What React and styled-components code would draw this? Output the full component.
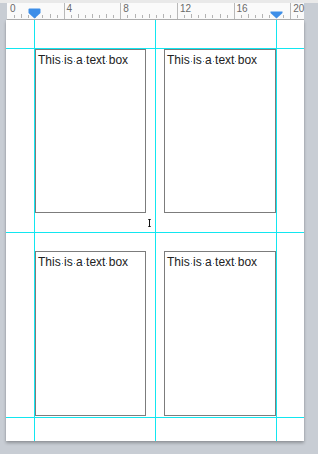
import React from 'react'
import styled, { createGlobalStyle } from 'styled-components'

const GlobalStyle = createGlobalStyle`
  html, body {
    margin: 0;
    padding: 0;
    background: #c8cdd4;
  }
  body {
    font-family: "Liberation Sans", Arial, sans-serif;
  }
`

const UNIT = 56.67 / 4

const Workspace = styled.div`
  width: 318px;
  height: 454px;
  background: #c8cdd4;
  display: flex;
  flex-direction: column;
  overflow: hidden;
`

const TopStrip = styled.div`
  height: 3px;
  background: #e9e9e9;
`

const RulerBar = styled.div`
  position: relative;
  margin-left: 7px;
  width: 297px;
  height: 16px;
  background: #fafafa;
  border-bottom: 1px solid #b4b4b4;
  display: flex;
`

const Segment = styled.div`
  width: ${p => p.width}px;
  flex: none;
  border-left: 1px solid ${p => (p.first ? 'transparent' : '#b9b9b9')};
  box-sizing: border-box;
  font-size: 10px;
  line-height: 10px;
  color: #6a6a6a;
  padding: 1px 0 0 2px;
`

const Ticks = styled.svg`
  position: absolute;
  left: 0;
  bottom: 0;
  pointer-events: none;
`

const Marker = styled.svg`
  position: absolute;
  top: ${p => p.top}px;
  left: ${p => p.left}px;
`

const Page = styled.div`
  position: relative;
  margin-left: 6px;
  width: 298px;
  height: 421px;
  background: #ffffff;
  box-shadow: 0 2px 3px rgba(0, 0, 0, 0.28), 0 0 1px rgba(0, 0, 0, 0.15);
`

const BoxGrid = styled.div`
  display: grid;
  grid-template-columns: 111px 112px;
  grid-template-rows: 164px 165px;
  column-gap: 18px;
  row-gap: 38px;
  padding: 29px 0 0 29px;
`

const TextBox = styled.div`
  border: 1px solid #7c7c7c;
  box-sizing: border-box;
  padding: 3px 2px 2px;
  font-size: 12px;
  color: #222;
  white-space: nowrap;
`

const Space = styled.span`
  position: relative;
  &::after {
    content: '';
    position: absolute;
    left: 1px;
    top: 8px;
    width: 1px;
    height: 1px;
    background: #4f92d6;
  }
`

const Guide = styled.div`
  position: absolute;
  background: #12e6f0;
  ${p =>
    p.vertical
      ? `left: ${p.at}px; top: 0; bottom: 0; width: 1px;`
      : `top: ${p.at}px; left: 0; right: 0; height: 1px;`}
`

const Cursor = styled.svg`
  position: absolute;
  left: 142px;
  top: 199px;
`

const labels = [0, 4, 8, 12, 16, 20]
const segWidths = [56.6, 56.7, 56.7, 56.6, 56.7, 13.7]

function Ruler() {
  const ticks = []
  for (let i = 1; i < 42; i++) {
    if (i % 8 === 0) continue
    const x = Math.round(i * UNIT / 2)
    const h = i % 2 === 0 ? 4 : 3
    ticks.push(<rect key={i} x={x} y={16 - h - 1} width="1" height={h} fill="#b3b3b3" />)
  }
  return (
    <RulerBar>
      {labels.map((n, i) => (
        <Segment key={n} width={segWidths[i]} first={i === 0}>{n}</Segment>
      ))}
      <Ticks width="297" height="16">{ticks}</Ticks>
      <Marker left={21} top={5} width="13" height="11" viewBox="0 0 13 11">
        <path d="M1.5 0.5 H11.5 Q12.5 0.5 12.5 1.5 V5 L6.5 10.5 L0.5 5 V1.5 Q0.5 0.5 1.5 0.5 Z" fill="#3d8ee8" />
      </Marker>
      <Marker left={263} top={8} width="13" height="8" viewBox="0 0 13 8">
        <path d="M0.5 0.5 H12.5 V2 L6.5 7.5 L0.5 2 Z" fill="#3d8ee8" />
      </Marker>
    </RulerBar>
  )
}

function BoxText() {
  return (
    <TextBox>
      This<Space> </Space>is<Space> </Space>a<Space> </Space>text<Space> </Space>box
    </TextBox>
  )
}

export default function App() {
  return (
    <>
      <GlobalStyle />
      <Workspace>
        <TopStrip />
        <Ruler />
        <Page>
          <BoxGrid>
            <BoxText />
            <BoxText />
            <BoxText />
            <BoxText />
          </BoxGrid>
          <Guide vertical at={28} />
          <Guide vertical at={149} />
          <Guide vertical at={270} />
          <Guide at={28} />
          <Guide at={212} />
          <Guide at={397} />
          <Cursor width="3" height="8" viewBox="0 0 3 8">
            <rect x="1" y="0" width="1" height="8" fill="#111" />
            <rect x="0" y="0" width="1" height="1" fill="#555" />
            <rect x="2" y="0" width="1" height="1" fill="#555" />
            <rect x="0" y="7" width="1" height="1" fill="#555" />
            <rect x="2" y="7" width="1" height="1" fill="#555" />
          </Cursor>
        </Page>
      </Workspace>
    </>
  )
}
